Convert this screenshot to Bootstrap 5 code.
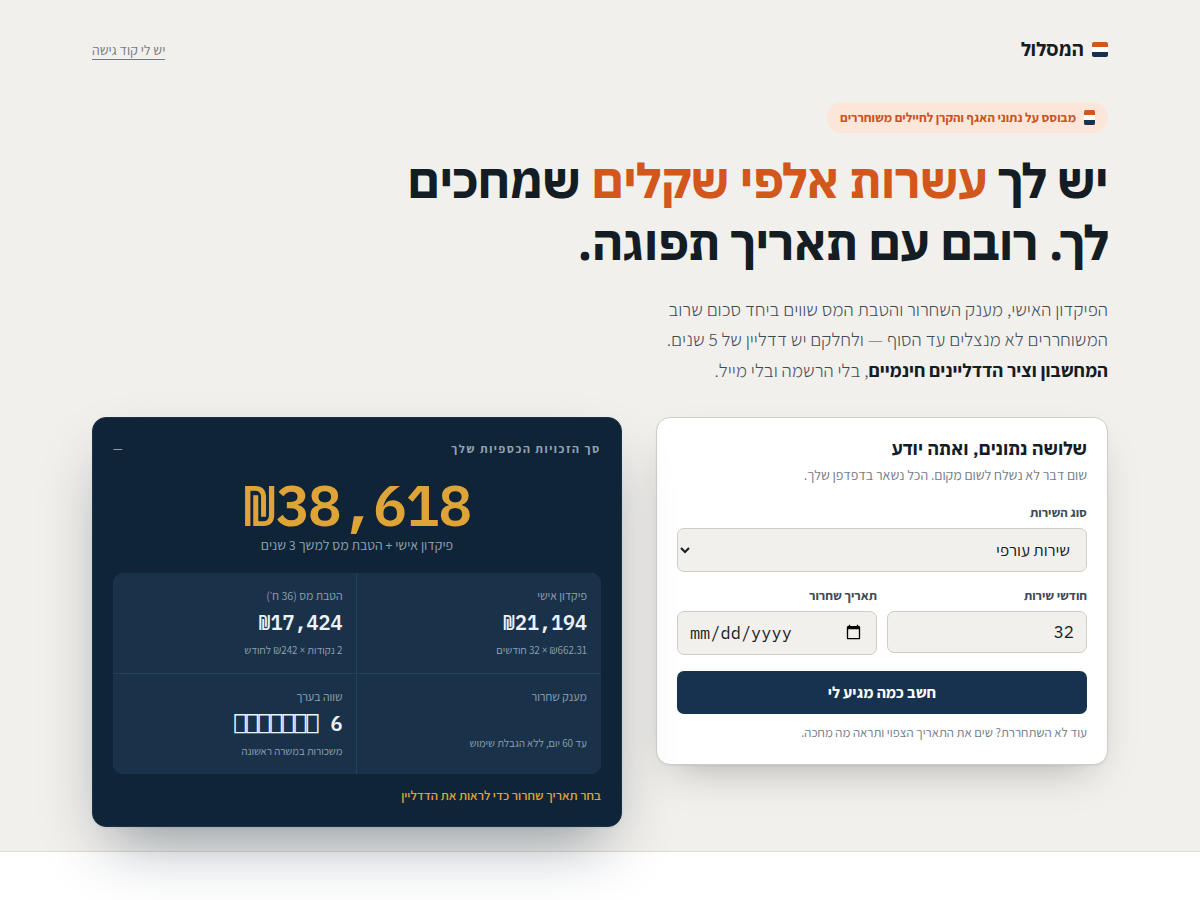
<!DOCTYPE html>
<html lang="he" dir="rtl">
<head>
<meta charset="utf-8">
<meta name="viewport" content="width=device-width, initial-scale=1">
<title>המסלול</title>
<link rel="stylesheet" href="https://cdn.jsdelivr.net/npm/bootstrap@5.3.0/dist/css/bootstrap.min.css">
<style>
:root{--paper:#f2f0ec;--ink:#141c24;--ink-2:#3f4a56;--muted:#717b86;--line:#cfcdc6;--navy:#17324e;--deep:#0f2437;--cell:#1a3249;--orange:#d1571d;--gold:#dfa437;--head:"IBM Plex Sans Hebrew","Open Sans",sans-serif;--mono:"IBM Plex Mono","Liberation Mono",monospace}
body{font-family:"Assistant","Open Sans",sans-serif;font-size:16px;line-height:1.6;color:var(--ink);background:#fff}
.hero{background:var(--paper);border-bottom:1px solid #dddad2;padding-bottom:24px}
.page-wrap{max-width:1060px;margin:0 auto;padding:0 22px}
.topbar{padding:33px 0 37px}
.brand-name{font-family:var(--head);font-size:19px;font-weight:700;line-height:32px}
.code-link{font-size:14px;line-height:17px;color:var(--muted);text-decoration:none;border-bottom:1px solid currentColor}
.flag{width:16px;height:15px;flex:none}
.flag-sm{width:11px}
.source-pill{background:#fce6da;color:#c9531d;font-size:13px;font-weight:700;line-height:21px;padding:5px 13px}
h1{font-family:var(--head);font-size:48px;font-weight:700;line-height:1.3;letter-spacing:-.01em;max-width:760px;margin:16px 0 20px}
h1 span{color:var(--orange)}
.intro{font-size:19px;line-height:1.6;color:var(--ink-2);max-width:460px;font-weight:300}
.intro strong{color:var(--ink);font-weight:700}
.tool-grid{display:grid;grid-template-columns:minmax(0,1fr) minmax(0,1.172fr);gap:34px;align-items:start;margin-top:32px}
@media (max-width:800px){.tool-grid{grid-template-columns:minmax(0,1fr)}}
.form-panel,.sum-panel{border-radius:14px;padding:20px;border:1px solid var(--line);background:#fff;box-shadow:0 1px 2px rgba(20,28,36,.06),0 18px 40px -18px rgba(20,28,36,.35)}
.form-panel h2{font-family:var(--head);font-size:18px;font-weight:700;line-height:22px}
.hint{font-size:14px;line-height:22px;color:var(--muted)}
.hint-sm{font-size:13px}
.form-panel label{display:block;font-size:13px;font-weight:700;line-height:21px;margin-bottom:5px;color:var(--ink-2)}
.field{display:block;width:100%;background:var(--paper);border:1px solid var(--line);border-radius:7px;padding:9px 12px;font-size:17px;line-height:26px;color:var(--ink)}
.field-mono{font-family:var(--mono);line-height:normal}
input[type=date]{padding-top:10px;padding-bottom:10px}
.pair{display:grid;grid-template-columns:1fr 1fr;gap:10px;margin-top:13px}
input[type=number]{appearance:textfield;-moz-appearance:textfield}
.btn-calc{background:var(--navy);color:#fff;font-size:16px;font-weight:700;line-height:21px;border:0;border-radius:7px;padding:11px}
.btn-calc:hover{background:var(--deep);color:#fff}
.sum-panel{background:var(--deep);border-color:var(--cell);color:#8fa3b6;box-shadow:0 1px 2px rgba(20,28,36,.06),0 30px 60px -18px rgba(15,36,55,.45)}
.sum-label{font-size:12px;font-weight:700;letter-spacing:.13em;line-height:22px}
.total{font:600 56px/58px var(--mono);letter-spacing:-1px;color:var(--gold)}
.total-note{font-size:14px;line-height:23px}
.cells{display:grid;grid-template-columns:1fr 1fr;gap:1px;background:#27405a;border-radius:10px;overflow:hidden}
.cell{background:var(--cell);padding:13px 14px}
.cell-label,.cell-sub{font-size:12px;line-height:19px}
.cell-sub{font-size:11px}
.cell-value{font:600 20px/28px var(--mono);color:#eaf2fb;min-height:20px;margin:4px 0}
.deadline{font-size:13px;font-weight:600;line-height:20px;color:var(--gold);margin-top:12px}
</style>
</head>
<body class="min-vh-100">
<main class="hero">
  <div class="page-wrap">
    <header class="topbar d-flex justify-content-between align-items-center">
      <div class="d-flex align-items-center gap-2">
        <svg class="flag" viewBox="0 0 16 15" preserveAspectRatio="none" aria-hidden="true"><path fill="#d1571d" d="M0 5V2Q0 0 2 0H14Q16 0 16 2V5Z"/><path fill="#fff" d="M0 5H16V10H0Z"/><path fill="#17324e" d="M0 10H16V13Q16 15 14 15H2Q0 15 0 13Z"/></svg>
        <span class="brand-name">המסלול</span>
      </div>
      <a class="code-link mt-1" href="#code">יש לי קוד גישה</a>
    </header>
    <div class="source-pill d-inline-flex align-items-center gap-2 rounded-pill">
      <svg class="flag flag-sm" viewBox="0 0 16 15" preserveAspectRatio="none" aria-hidden="true"><path fill="#d1571d" d="M0 5V2Q0 0 2 0H14Q16 0 16 2V5Z"/><path fill="#fff" d="M0 5H16V10H0Z"/><path fill="#17324e" d="M0 10H16V13Q16 15 14 15H2Q0 15 0 13Z"/></svg>
      <span>מבוסס על נתוני האגף והקרן לחיילים משוחררים</span>
    </div>
    <h1>יש לך <span>עשרות אלפי שקלים</span> שמחכים לך. רובם עם תאריך תפוגה.</h1>
    <p class="intro mb-0">הפיקדון האישי, מענק השחרור והטבת המס שווים ביחד סכום שרוב המשוחררים לא מנצלים עד הסוף — ולחלקם יש דדליין של 5 שנים. <strong>המחשבון וציר הדדליינים חינמיים</strong>, בלי הרשמה ובלי מייל.</p>
    <div class="tool-grid">
      <form class="form-panel" id="calc">
        <h2 class="mb-1">שלושה נתונים, ואתה יודע</h2>
        <p class="hint mb-3">שום דבר לא נשלח לשום מקום. הכל נשאר בדפדפן שלך.</p>
        <label for="service">סוג השירות</label>
        <select id="service" class="field"><option>שירות עורפי</option><option>שירות לוחם</option></select>
        <div class="pair">
          <div>
            <label for="months">חודשי שירות</label>
            <input id="months" class="field field-mono" type="number" value="32">
          </div>
          <div>
            <label for="release">תאריך שחרור</label>
            <input id="release" class="field field-mono" type="date">
          </div>
        </div>
        <button type="button" class="btn btn-calc w-100 mt-3">חשב כמה מגיע לי</button>
        <p class="hint hint-sm mt-2 mb-0">עוד לא השתחררת? שים את התאריך הצפוי ותראה מה מחכה.</p>
      </form>
      <section class="sum-panel">
        <div class="sum-label d-flex justify-content-between"><span>סך הזכויות הכספיות שלך</span><span>—</span></div>
        <div class="text-center mt-3">
          <div class="total">₪38,618</div>
          <div class="total-note">פיקדון אישי + הטבת מס למשך 3 שנים</div>
        </div>
        <div class="cells mt-3">
          <div class="cell"><div class="cell-label">פיקדון אישי</div><div class="cell-value">₪21,194</div><div class="cell-sub">₪662.31 × 32 חודשים</div></div>
          <div class="cell"><div class="cell-label">הטבת מס (36 ח׳)</div><div class="cell-value">₪17,424</div><div class="cell-sub">2 נקודות × ₪242 לחודש</div></div>
          <div class="cell"><div class="cell-label">מענק שחרור</div><div class="cell-value"></div><div class="cell-sub">עד 60 יום, ללא הגבלת שימוש</div></div>
          <div class="cell"><div class="cell-label">שווה בערך</div><div class="cell-value">6 ⎕⎕⎕⎕⎕⎕⎕</div><div class="cell-sub">משכורות במשרה ראשונה</div></div>
        </div>
        <div class="deadline">בחר תאריך שחרור כדי לראות את הדדליין</div>
      </section>
    </div>
  </div>
</main>
<script src="https://cdn.jsdelivr.net/npm/bootstrap@5.3.0/dist/js/bootstrap.bundle.min.js"></script>
</body>
</html>
